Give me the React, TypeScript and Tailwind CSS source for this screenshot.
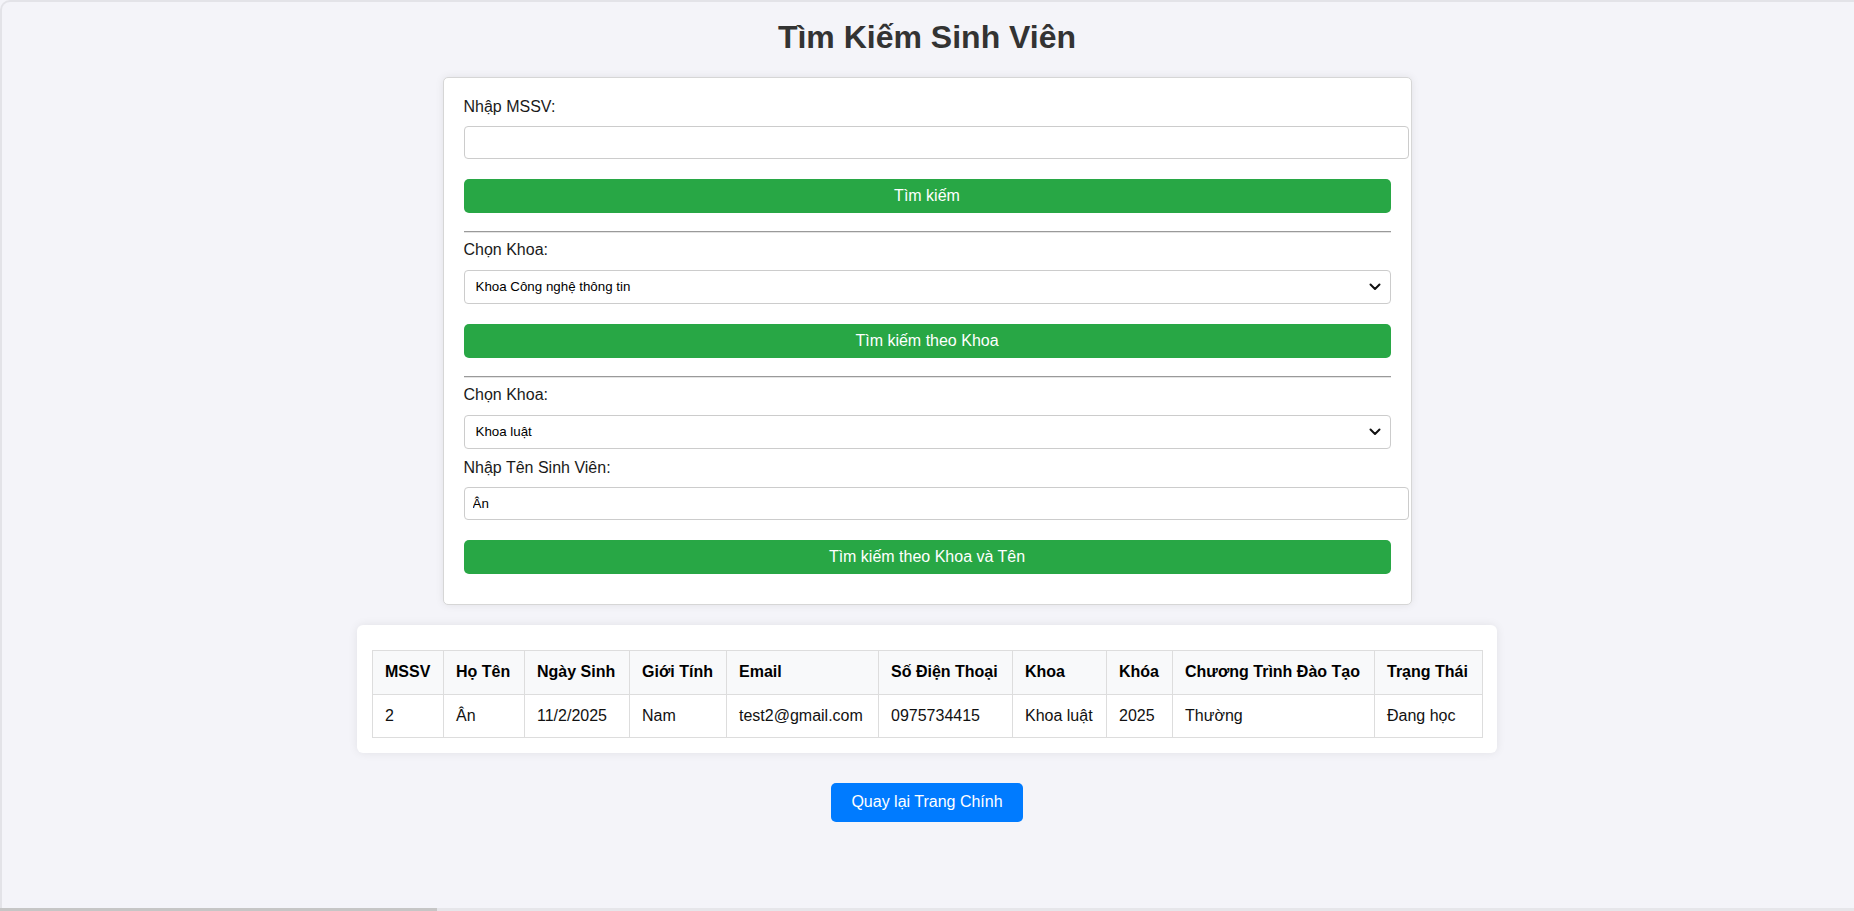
import { useState } from 'react'

const columns = [
  { label: 'MSSV', w: 'w-[71px]' },
  { label: 'Họ Tên', w: 'w-[81px]' },
  { label: 'Ngày Sinh', w: 'w-[105px]' },
  { label: 'Giới Tính', w: 'w-[97px]' },
  { label: 'Email', w: 'w-[152px]' },
  { label: 'Số Điện Thoại', w: 'w-[134px]' },
  { label: 'Khoa', w: 'w-[94px]' },
  { label: 'Khóa', w: 'w-[66px]' },
  { label: 'Chương Trình Đào Tạo', w: 'w-[202px]' },
  { label: 'Trạng Thái', w: 'w-[108px]' },
]

const students = [
  ['2', 'Ân', '11/2/2025', 'Nam', 'test2@gmail.com', '0975734415', 'Khoa luật', '2025', 'Thường', 'Đang học'],
]

function Chevron() {
  return (
    <svg
      className="pointer-events-none absolute right-[10px] top-1/2 -translate-y-1/2"
      width="12"
      height="8"
      viewBox="0 0 12 8"
      fill="none"
    >
      <path d="M1.5 1.5 6 6l4.5-4.5" stroke="#111" strokeWidth="2" strokeLinecap="round" strokeLinejoin="round" />
    </svg>
  )
}

function Select({ value, options }: { value: string; options: string[] }) {
  return (
    <div className="relative mt-[10px] w-full">
      <select
        defaultValue={value}
        className="block h-[34.4px] w-full appearance-none rounded-[4px] border border-[#ccc] bg-white pl-[11px] pr-[30px] text-[13.33px] text-black outline-none"
      >
        {options.map((o) => (
          <option key={o}>{o}</option>
        ))}
      </select>
      <Chevron />
    </div>
  )
}

const khoas = ['Khoa Công nghệ thông tin', 'Khoa luật', 'Khoa Kinh tế', 'Khoa Ngoại ngữ']

export default function App() {
  const [mssv, setMssv] = useState('')
  const [name, setName] = useState('Ân')

  return (
    <div className="flex h-[911px] flex-col overflow-hidden bg-[#f4f4f9] font-['Liberation_Sans',Arial,sans-serif] text-[#333]">
      <div className="flex flex-1 flex-col items-center rounded-tl-[10px] border-l-2 border-t-2 border-[#e3e3e8] pr-[2px] pt-[17px]">
        <h1 className="mb-[21px] text-[32px] font-bold leading-[37px] text-[#333]">Tìm Kiếm Sinh Viên</h1>

        {/* Search form */}
        <div className="flex w-[969px] flex-col rounded-[5px] border border-[#d6d6d6] bg-white px-[20px] pb-[30px] pt-[20px] text-[#1a1a1a] shadow-[0_0_8px_rgba(0,0,0,0.08)]">
          <label className="block text-[16px] leading-[18.4px]">Nhập MSSV:</label>
          <input
            value={mssv}
            onChange={(e) => setMssv(e.target.value)}
            className="mt-[10px] h-[33px] w-[945px] shrink-0 rounded-[4px] border border-[#ccc] bg-white px-[8px] text-[13.33px] text-black outline-none"
          />
          <button className="mt-[20px] h-[34px] w-full rounded-[5px] bg-[#28a745] text-[16px] text-white">Tìm kiếm</button>

          <div className="mb-[8px] mt-[18px] h-[2px] border-b border-t border-b-[#e4e4e4] border-t-[#9a9a9a]" />

          <label className="block text-[16px] leading-[18.4px]">Chọn Khoa:</label>
          <Select value="Khoa Công nghệ thông tin" options={khoas} />
          <button className="mt-[20px] h-[34px] w-full rounded-[5px] bg-[#28a745] text-[16px] text-white">
            Tìm kiếm theo Khoa
          </button>

          <div className="mb-[8px] mt-[18px] h-[2px] border-b border-t border-b-[#e4e4e4] border-t-[#9a9a9a]" />

          <label className="block text-[16px] leading-[18.4px]">Chọn Khoa:</label>
          <Select value="Khoa luật" options={khoas} />
          <label className="mt-[10px] block text-[16px] leading-[18.4px]">Nhập Tên Sinh Viên:</label>
          <input
            value={name}
            onChange={(e) => setName(e.target.value)}
            className="mt-[10px] h-[33px] w-[945px] shrink-0 rounded-[4px] border border-[#ccc] bg-white px-[8px] text-[13.33px] text-black outline-none"
          />
          <button className="mt-[20px] h-[34px] w-full rounded-[5px] bg-[#28a745] text-[16px] text-white">
            Tìm kiếm theo Khoa và Tên
          </button>
        </div>

        {/* Results */}
        <div className="mt-[20px] w-[1140px] rounded-[6px] bg-white px-[15px] pb-[15px] pt-[25px] shadow-[0_0_10px_rgba(0,0,0,0.08)]">
          <table className="w-[1110px] table-fixed border-collapse text-[16px] text-[#111]">
            <thead>
              <tr className="bg-[#f8f9fa]">
                {columns.map((c) => (
                  <th
                    key={c.label}
                    className={`${c.w} border border-[#ddd] px-[12px] py-[12px] text-left font-bold leading-[18.4px] text-black`}
                  >
                    <span className="whitespace-nowrap">{c.label}</span>
                  </th>
                ))}
              </tr>
            </thead>
            <tbody>
              {students.map((row) => (
                <tr key={row[0]}>
                  {row.map((cell, i) => (
                    <td key={i} className="whitespace-nowrap border border-[#ddd] px-[12px] py-[12px] leading-[18.4px]">
                      {cell}
                    </td>
                  ))}
                </tr>
              ))}
            </tbody>
          </table>
        </div>

        <button className="mt-[30px] rounded-[5px] bg-[#007bff] px-[20px] py-[10px] text-[16px] leading-[18.4px] text-white">
          Quay lại Trang Chính
        </button>
      </div>

      {/* bottom scroll strip */}
      <div className="flex h-[3px] shrink-0 bg-[#e6e6ea]">
        <div className="w-[437px] bg-[#c6c6c6]" />
      </div>
    </div>
  )
}
